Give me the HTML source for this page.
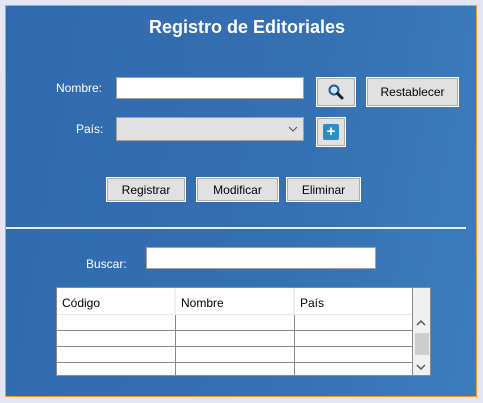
<!DOCTYPE html>
<html><head><meta charset="utf-8"><style>
*{box-sizing:border-box;margin:0;padding:0}
body{width:483px;height:403px;background:#e4e6f6;position:relative;overflow:hidden;font-family:"Liberation Sans",sans-serif;font-size:12px}
#p{position:absolute;left:5px;top:5px;width:472px;height:392px;background:linear-gradient(100deg,#3169ae 0%,#3570b2 60%,#3c7dbf 100%);border:1px solid #f0a020}
.a{position:absolute}
.lbl{color:#fff;font-size:12px}
.in{background:#fff;border:1px solid #a0a0a0}
.btn{background:#e1e1e1;border:1px solid #adadad;box-shadow:0 0 0 1px #fff;display:flex;align-items:center;justify-content:center;color:#000;font-size:12px}
.t{position:absolute;left:56px;top:287px;width:375px;height:89px;background:#fff;border:1px solid #8a8a8a}
</style></head><body>
<div id="p"></div>
<div class="a" style="left:0;top:17px;width:494px;text-align:center;color:#fff;font-weight:bold;font-size:18px">Registro de Editoriales</div>
<div class="a lbl" style="left:56px;top:81px">Nombre:</div>
<div class="a in" style="left:116px;top:77px;width:188px;height:22px"></div>
<div class="a btn" style="left:317px;top:78px;width:38px;height:28px">
<svg width="18" height="18" viewBox="0 0 18 18"><circle cx="7" cy="7" r="4.5" fill="#cfe6f7" stroke="#1c5a9a" stroke-width="2"/><path d="M10.5 10.5 L15 15" stroke="#123" stroke-width="3" stroke-linecap="round"/></svg></div>
<div class="a btn" style="left:367px;top:78px;width:91px;height:28px">Restablecer</div>
<div class="a lbl" style="left:76px;top:122px">País:</div>
<div class="a" style="left:116px;top:117px;width:188px;height:24px;background:#e1e1e1;border:1px solid #a0a0a0"><svg class="a" style="left:171px;top:8px" width="10" height="6"><path d="M1 1 L5 5 L9 1" stroke="#555" fill="none"/></svg></div>
<div class="a btn" style="left:317px;top:118px;width:28px;height:28px"><div style="width:16px;height:16px;background:#2a8fc4;border-radius:2px;color:#fff;font-weight:bold;font-size:15px;line-height:16px;text-align:center">+</div></div>
<div class="a btn" style="left:107px;top:178px;width:78px;height:23px">Registrar</div>
<div class="a btn" style="left:197px;top:178px;width:81px;height:23px">Modificar</div>
<div class="a btn" style="left:287px;top:178px;width:73px;height:23px">Eliminar</div>
<div class="a" style="left:6px;top:227px;width:460px;height:2px;background:#e8eef6"></div>
<div class="a lbl" style="left:86px;top:257px">Buscar:</div>
<div class="a in" style="left:146px;top:247px;width:230px;height:22px"></div>
<div class="t">
<div class="a" style="left:0;top:0;width:355px;height:27px;background:#fff;border-bottom:1px solid #e8e8e8"></div>
<div class="a" style="left:5px;top:8px;font-size:12px">Código</div>
<div class="a" style="left:124px;top:8px">Nombre</div>
<div class="a" style="left:243px;top:8px">País</div>
<div class="a" style="left:117px;top:0;width:2px;height:27px;background:#eee"></div>
<div class="a" style="left:236px;top:0;width:2px;height:27px;background:#eee"></div>
<div class="a" style="left:118px;top:27px;width:1px;height:60px;background:#888"></div>
<div class="a" style="left:237px;top:27px;width:1px;height:60px;background:#888"></div>
<div class="a" style="left:0;top:42px;width:355px;height:1px;background:#888"></div>
<div class="a" style="left:0;top:58px;width:355px;height:1px;background:#888"></div>
<div class="a" style="left:0;top:74px;width:355px;height:1px;background:#888"></div>
<div class="a" style="left:355px;top:0;width:18px;height:87px;background:#f0f0f0;border-left:1px solid #888"></div>
<div class="a" style="left:356px;top:0;width:17px;height:27px;background:#f0f0f0"></div>
<svg class="a" style="left:359px;top:31px" width="10" height="8"><path d="M1 6 L5 2 L9 6" stroke="#555" stroke-width="1.5" fill="none"/></svg>
<div class="a" style="left:358px;top:45px;width:14px;height:22px;background:#cdcdcd"></div>
<svg class="a" style="left:359px;top:75px" width="10" height="8"><path d="M1 2 L5 6 L9 2" stroke="#555" stroke-width="1.5" fill="none"/></svg>
</div>
</body></html>
